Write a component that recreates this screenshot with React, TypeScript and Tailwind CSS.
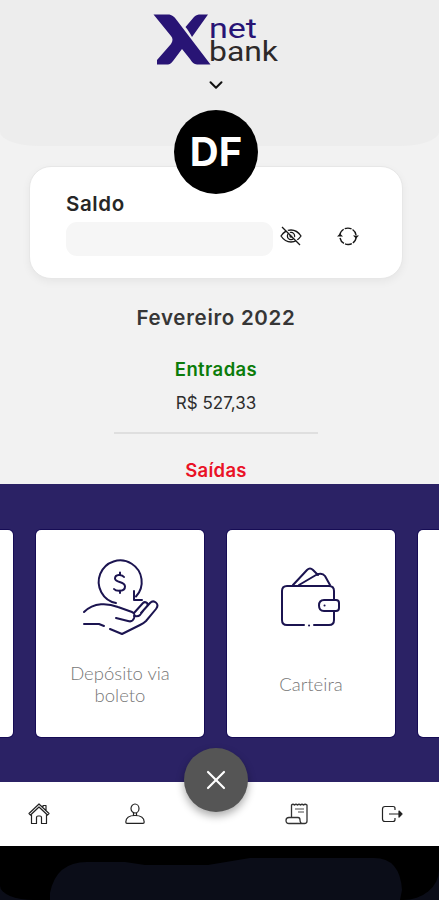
import React from 'react';
import { ChevronDown, X } from 'lucide-react';

const Logo: React.FC = () => (
  <svg width="126" height="54" viewBox="0 0 126 54" className="overflow-visible" aria-label="Xnet bank">
    <path
      d="M0.500 0.500H15C19 .5 21.500 3 24 6.500L57.500 50.500H44C41 50.500 39 48 37 45L29 35L20 47C18 50 16 50.500 13 50.500H4V46L18 30C20 27 20 24 18 22Z"
      fill="#281475"
    />
    <path d="M32.500 13L41 3C43 1 45 .5 48 .5H55L39 23C37 19 35 16 32.500 13Z" fill="#281475" />
    <text x="56" y="23.500" fontFamily="Roboto" fontSize="27" fill="#281475" textLength="48" lengthAdjust="spacingAndGlyphs">net</text>
    <text x="56" y="46.500" fontFamily="Roboto" fontSize="28" fill="#2d2929" textLength="69" lengthAdjust="spacingAndGlyphs">bank</text>
  </svg>
);

const EyeOffIcon: React.FC = () => (
  <svg width="22" height="20" viewBox="0 0 22 20" fill="none" stroke="#171717" strokeWidth="1.3">
    <path d="M1 10Q5 4 11 4T21 10Q17 16 11 16T1 10Z" />
    <circle cx="11" cy="10" r="3.600" />
    <circle cx="11" cy="10" r="1" />
    <path d="M3.500 1L21.500 19" stroke="#fff" strokeWidth="1.300" />
    <path d="M2 1L20 19" />
  </svg>
);

const RefreshIcon: React.FC = () => (
  <svg width="22" height="20" viewBox="0 0 22 20" fill="none" stroke="#171717" strokeWidth="1.4">
    <path d="M2.800 9A8.200 8.200 0 0 1 19 9M19.200 11A8.200 8.200 0 0 1 3 12" strokeDasharray="7 1.200" />
    <path d="M0 10.500L3 7.500L6 10.500ZM16 9.500L19 12.500L22 9.500Z" fill="#171717" stroke="none" />
  </svg>
);

const DepositIcon: React.FC = () => (
  <svg width="80" height="80" viewBox="0 0 80 80" fill="none" stroke="#1b1450" strokeWidth="2" strokeLinecap="round" strokeLinejoin="round">
    <path d="M37 46A21.500 21.500 0 1 1 57 39.500" />
    <path d="M55 34V43H63" />
    <path d="M45 20C43 17 36 17 36 21.500C36 26 46 24 46 29.500C46 35 37 34.500 35 32M41 15.500V18M41 33.500V36" />
    <path d="M5 55C15 45 29 46 39 50L53 55C58 57 55 66 49 64L37 61" />
    <path d="M55 56L64 46C66 44 70 46 68 49L61 58C59 60 56 59 55 59M62 56L71 46C75 42 81 47 77 52L67 64C65 66 63 67 61 68L43 77L31 72" />
    <path d="M5 67H20L25 69" />
  </svg>
);

const WalletIcon: React.FC = () => (
  <svg width="62" height="62" viewBox="0 0 62 62" fill="none" stroke="#1b1450" strokeWidth="2" strokeLinecap="round" strokeLinejoin="round">
    <path d="M54 33V24Q54 19 49 19H7Q2 19 2 24V53Q2 58 7 58H24M34 58H49Q54 58 54 53V45" />
    <path d="M13 18L27 3Q30 0 33 3L38 8M19 18L36 8Q42 5 45 9L50 18" />
    <path d="M44 33H56Q59 33 59 36V41Q59 44 56 44H44Q39 44 39 38.500T44 33Z" />
    <path d="M44.500 38.500H44.600M29 58.500H29.100" />
  </svg>
);

const HomeIcon: React.FC = () => (
  <svg width="22" height="22" viewBox="0 0 22 22" fill="none" stroke="#222" strokeWidth="1.2" strokeLinejoin="round">
    <path d="M1 10.500L11 1L21 10.500L19.500 12L11 4L2.500 12ZM15 4V2.500H18V7.500" />
    <path d="M3.500 11.500V20.500H8.500V14.500Q8.500 13 10 13H12Q13.500 13 13.500 14.500V20.500H18.500V11.500" />
  </svg>
);

const UserIcon: React.FC = () => (
  <svg width="22" height="22" viewBox="0 0 22 22" fill="none" stroke="#222" strokeWidth="1.2" strokeLinejoin="round">
    <ellipse cx="11" cy="5.500" rx="4" ry="4.500" />
    <path d="M11 12.500Q2 12.500 1.800 19Q1.800 20.300 3 20.300H19Q20.200 20.300 20.200 19Q20 12.500 11 12.500ZM9.500 10V12.500M12.500 10V12.500" />
  </svg>
);

const StatementIcon: React.FC = () => (
  <svg width="24" height="22" viewBox="0 0 24 22" fill="none" stroke="#333" strokeWidth="1.3" strokeLinejoin="round">
    <path d="M6.500 14V2Q8 .5 9.500 2Q11 .5 12.500 2Q14 .5 15.500 2Q17 .5 18.500 2Q20 .5 22 2V18Q22 20.500 19.500 20.500H4Q1 20.500 1 17.500Q1 14.500 4 14.500H13Q15 14.500 15 17Q15 20.500 18 20.500" />
    <path d="M10 6H19M13 9H19" stroke="#888" />
  </svg>
);

const LogoutIcon: React.FC = () => (
  <svg width="22" height="20" viewBox="0 0 22 20" fill="none" stroke="#222" strokeWidth="1.2" strokeLinejoin="round">
    <path d="M14 6V4.500Q14 2.500 12 2.500H4Q1.500 2.500 1.500 5V15Q1.500 17.500 4 17.500H12Q14 17.500 14 15.500V14M8 10H20" />
    <path d="M18 7L21 10L18 13Z" fill="#222" />
  </svg>
);

const ServiceCard: React.FC<{ children?: React.ReactNode }> = ({ children }) => (
  <div className="flex h-[207px] w-[168px] shrink-0 flex-col items-center rounded-[5px] bg-white shadow-[0_0_0_1px_#160c55]">
    {children}
  </div>
);

const App: React.FC = () => {
  return (
    <div className="relative flex h-[900px] w-[439px] flex-col overflow-hidden bg-[#f2f2f2] font-['Inter',sans-serif]">
      <header className="relative flex h-[146px] shrink-0 flex-col items-center rounded-b-[40px_14px] bg-[#ededed] pt-3.5 pr-[7px]">
        <Logo />
        <ChevronDown className="mt-1.5 size-[22px] text-[#111]" strokeWidth={2.2} />
        <div className="absolute top-[110px] left-[174px] z-10 flex size-[84px] items-center justify-center rounded-full bg-black text-[40px] font-bold text-white">
          DF
        </div>
      </header>

      <section className="mt-5 ml-[29px] h-[113px] w-[374px] shrink-0 rounded-[22px] border border-[#e7e7e7] bg-white pt-[25px] pl-9 shadow-[0_3px_8px_#0000000d]">
        <h2 className="text-[20.5px] leading-[23px] font-semibold tracking-[0.6px] text-[#262626]">Saldo</h2>
        <div className="mt-[7px] flex items-center">
          <div className="h-[34px] w-[207px] rounded-[11px] bg-[#f6f6f6]" />
          <div className="-mt-1.5 ml-[7px]"><EyeOffIcon /></div>
          <div className="-mt-1.5 ml-[35px]"><RefreshIcon /></div>
        </div>
      </section>

      <section className="flex h-[205px] shrink-0 flex-col items-center pt-[25px] pr-[7px]">
        <h2 className="text-[20.5px] leading-7 font-semibold tracking-[0.7px] text-[#363636]">Fevereiro 2022</h2>
        <h3 className="mt-[25px] text-[18.5px] leading-6 font-semibold tracking-[0.4px] text-[#0b7c0b]">Entradas</h3>
        <p className="mt-2.5 text-[17px] leading-6 text-[#2d2d2d]">R$ 527,33</p>
        <div className="mt-[17px] h-0.5 w-[204px] shrink-0 bg-[#dfdfdf]" />
        <h3 className="mt-6 text-[18.5px] leading-6 font-semibold tracking-[0.3px] text-[#ea1226]">Saídas</h3>
      </section>

      <section className="flex h-[298px] shrink-0 gap-[23px] bg-[#2b2265] pt-[46px]">
        <div className="-ml-[155px] shrink-0"><ServiceCard /></div>
        <ServiceCard>
          <div className="mt-[27px] mr-0.5"><DepositIcon /></div>
          <p className="mt-[25px] w-[120px] text-center font-['Lato',sans-serif] text-[18.5px] leading-[22px] font-light text-[#777]">Depósito via boleto</p>
        </ServiceCard>
        <ServiceCard>
          <div className="mt-[37px]"><WalletIcon /></div>
          <p className="mt-11 font-['Lato',sans-serif] text-[18.5px] leading-[22px] font-light text-[#777]">Carteira</p>
        </ServiceCard>
        <ServiceCard />
      </section>

      <nav className="relative flex h-[64px] shrink-0 items-center bg-white pl-7">
        <HomeIcon />
        <div className="ml-[74px]"><UserIcon /></div>
        <div className="ml-[139px]"><StatementIcon /></div>
        <div className="ml-[72px]"><LogoutIcon /></div>
        <button className="absolute -top-[34px] left-[184px] flex size-16 items-center justify-center rounded-full bg-[#555] text-white shadow-[0_4px_9px_#00000055]">
          <X size={32} strokeWidth={1.6} />
        </button>
      </nav>

      <footer className="h-[54px] shrink-0 bg-[#0b0d18]">
        <div className="h-[54px] overflow-hidden rounded-br-[36px_30px] rounded-bl-[34px_14px] bg-black">
          <svg width="439" height="54" viewBox="0 0 439 54">
            <path d="M50 54V47Q56 16 87 16H125L145 19H208L250 12H374Q400 12 402 44L400 54Z" fill="#0b0d18" />
          </svg>
        </div>
      </footer>
    </div>
  );
};

export default App;
